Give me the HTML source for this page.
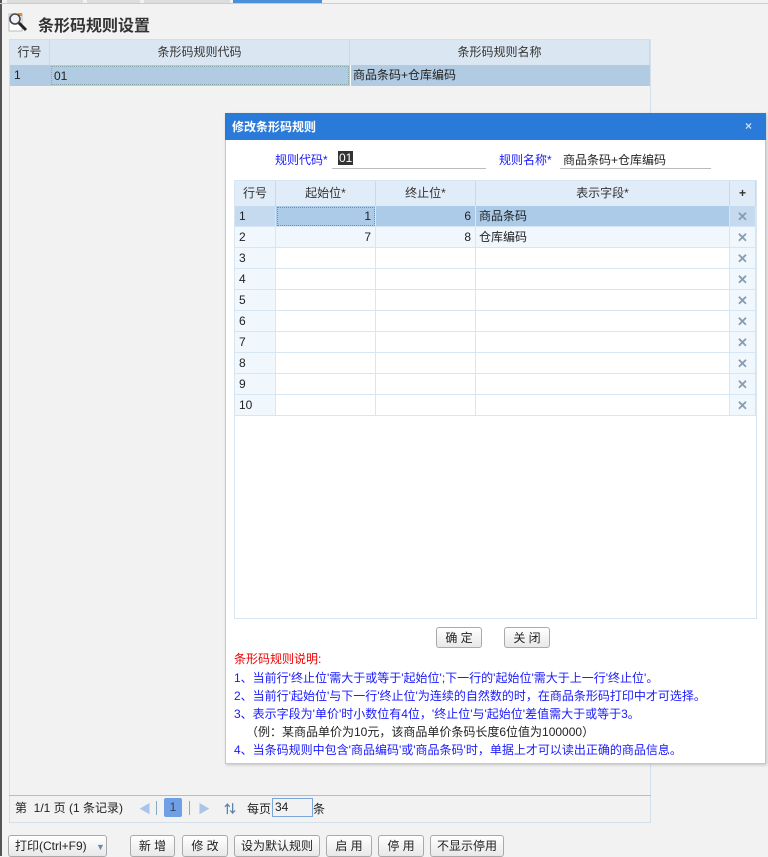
<!DOCTYPE html>
<html><head><meta charset="utf-8"><style>
*{margin:0;padding:0;box-sizing:border-box}
body{width:768px;height:856px;background:#f2f2f2;font-family:"Liberation Sans","Noto Sans CJK SC",sans-serif;font-size:12px;color:#222;position:relative;overflow:hidden}
.a{position:absolute}
.lb{left:0;top:0;width:2px;height:856px;background:#555}
.tab{top:0;height:3px;background:#ddd}
.hdr{background:#dae6f1;border-right:1px solid #c9d9e8;height:25px;line-height:25px;text-align:center;color:#333}
.cell{position:absolute;height:21px;line-height:21px;padding:0 4px;border-right:1px solid #d7e6f3;border-bottom:1px solid #d7e6f3}
.btn{position:absolute;top:835px;height:22px;border:1px solid #aaa;border-radius:3px;background:linear-gradient(#fff,#e8e8e8);text-align:center;line-height:20px;font-size:12px;color:#222}
.x{color:#8a9cb0;font-size:13px;text-align:center;font-weight:bold}
.blue{color:#1a1aff}
</style></head><body>
<div class="a lb"></div>
<div class="a tab" style="left:7px;width:76px"></div>
<div class="a tab" style="left:87px;width:53px"></div>
<div class="a tab" style="left:144px;width:86px"></div>
<div class="a tab" style="left:233px;width:89px;background:#4a8fd8"></div>
<div class="a" style="left:0;top:3px;width:768px;height:1px;background:#ccc"></div>
<svg class="a" style="left:7px;top:11px" width="24" height="22" viewBox="0 0 24 22"><rect x="2" y="3" width="13" height="17" fill="#fff" stroke="#bbb"/><rect x="11" y="2" width="4" height="3" fill="#e88a2a"/><circle cx="8" cy="8" r="5" fill="#eef3fa" stroke="#444" stroke-width="1.6"/><line x1="12" y1="12" x2="19" y2="19" stroke="#222" stroke-width="3"/></svg>
<div class="a" style="left:38px;top:12px;font-size:16px;font-weight:bold;color:#333">条形码规则设置</div>

<div class="a" style="left:9px;top:39px;width:642px;height:784px;border:1px solid #d3dfeb;background:#f2f2f2"></div>
<div class="a hdr" style="left:10px;top:40px;width:40px">行号</div>
<div class="a hdr" style="left:50px;top:40px;width:300px">条形码规则代码</div>
<div class="a hdr" style="left:350px;top:40px;width:300px">条形码规则名称</div>
<div class="a" style="left:10px;top:65px;width:640px;height:21px;background:#b1cbe3"></div>
<div class="a" style="left:14px;top:65px;line-height:21px">1</div>
<div class="a" style="left:51px;top:66px;width:298px;height:19px;border:1px dotted #8aa;line-height:19px;padding-left:2px">01</div>
<div class="a" style="left:350px;top:65px;width:1px;height:21px;background:#fff"></div>
<div class="a" style="left:353px;top:65px;line-height:21px">商品条码+仓库编码</div>
<div class="a" style="left:9px;top:795px;width:642px;height:1px;background:#bbb"></div>
<div class="a" style="left:15px;top:800px;line-height:16px">第&nbsp; 1/1 页 (1 条记录)</div>
<div class="a" style="left:139px;top:800px;color:#a8c4e8">◀</div>
<div class="a" style="left:156px;top:801px;width:1px;height:14px;background:#8ab"></div>
<div class="a" style="left:164px;top:798px;width:18px;height:19px;background:#6fa0e6;border-radius:2px;color:#345;text-align:center;line-height:19px">1</div>
<div class="a" style="left:189px;top:801px;width:1px;height:14px;background:#8ab"></div>
<div class="a" style="left:198px;top:800px;color:#a8c4e8">▶</div>
<div class="a" style="left:224px;top:800px;color:#5a7fa8;font-weight:bold">⇅</div>
<div class="a" style="left:247px;top:800px">每页</div>
<div class="a" style="left:272px;top:798px;width:41px;height:19px;border:1px solid #7aa6d8;background:#f2f2f2;padding-left:2px;line-height:17px">34</div>
<div class="a" style="left:313px;top:800px">条</div>

<div class="btn" style="left:8px;width:99px;text-align:left;padding-left:6px">打印(Ctrl+F9) <span style="color:#6a8ab8;font-size:9px;margin-left:6px">▼</span></div>
<div class="btn" style="left:130px;width:45px">新 增</div>
<div class="btn" style="left:182px;width:46px">修 改</div>
<div class="btn" style="left:234px;width:86px">设为默认规则</div>
<div class="btn" style="left:326px;width:46px">启 用</div>
<div class="btn" style="left:378px;width:46px">停 用</div>
<div class="btn" style="left:430px;width:74px">不显示停用</div>

<!-- dialog -->
<div class="a" style="left:225px;top:113px;width:541px;height:651px;background:#fff;border:1px solid #c8c8c8;box-shadow:1px 1px 3px rgba(0,0,0,.2)"></div>
<div class="a" style="left:225px;top:113px;width:541px;height:27px;background:#2a7ad9"></div>
<div class="a" style="left:232px;top:118px;color:#fff;font-weight:bold;font-size:12px">修改条形码规则</div>
<div class="a" style="left:745px;top:119px;color:#cde;font-weight:bold;font-size:12px">×</div>
<div class="a blue" style="left:275px;top:151px">规则代码*</div>
<div class="a" style="left:338px;top:151px;background:#333;color:#fff;line-height:14px;padding:0 1px">01</div>
<div class="a" style="left:332px;top:168px;width:154px;height:1px;background:#bbb"></div>
<div class="a blue" style="left:499px;top:151px">规则名称*</div>
<div class="a" style="left:563px;top:151px">商品条码+仓库编码</div>
<div class="a" style="left:560px;top:168px;width:151px;height:1px;background:#bbb"></div>

<div class="a" style="left:234px;top:180px;width:523px;height:439px;border:1px solid #d7e6f3"></div>
<div class="a hdr" style="left:235px;top:181px;width:41px;background:#e0ecf8">行号</div>
<div class="a hdr" style="left:276px;top:181px;width:100px;background:#e0ecf8">起始位*</div>
<div class="a hdr" style="left:376px;top:181px;width:100px;background:#e0ecf8">终止位*</div>
<div class="a hdr" style="left:476px;top:181px;width:254px;background:#e0ecf8">表示字段*</div>
<div class="a hdr" style="left:730px;top:181px;width:26px;background:#e0ecf8;font-weight:bold">+</div>
<div id="rows"></div>

<div class="btn" style="left:436px;top:627px;width:46px;height:21px">确 定</div>
<div class="btn" style="left:504px;top:627px;width:46px;height:21px">关 闭</div>
<div class="a" style="left:234px;top:650px;color:#e00">条形码规则说明:</div>
<div class="a blue" style="left:234px;top:669px">1、当前行'终止位'需大于或等于'起始位';下一行的'起始位'需大于上一行'终止位'。</div>
<div class="a blue" style="left:234px;top:687px">2、当前行'起始位'与下一行'终止位'为连续的自然数的时，在商品条形码打印中才可选择。</div>
<div class="a blue" style="left:234px;top:705px">3、表示字段为'单价'时小数位有4位，'终止位'与'起始位'差值需大于或等于3。</div>
<div class="a" style="left:246px;top:723px">（例：某商品单价为10元，该商品单价条码长度6位值为100000）</div>
<div class="a blue" style="left:234px;top:741px">4、当条码规则中包含'商品编码'或'商品条码'时，单据上才可以读出正确的商品信息。</div>
<script>
var d=[["1","1","6","商品条码"],["2","7","8","仓库编码"]],h="";
for(var i=0;i<10;i++){var t=206+i*21,r=d[i]||[(i+1)+"","","",""],sel=i==0;
var bg=sel?"#abcbe8":(i==1?"#f0f7fd":"#fff"),b0=sel?"#c5daee":"#f0f7fd";
h+='<div class="cell" style="left:235px;top:'+t+'px;width:41px;background:'+b0+'">'+r[0]+'</div>';
h+='<div class="cell" style="left:276px;top:'+t+'px;width:100px;text-align:right;background:'+bg+(sel?';outline:1px dotted #889;outline-offset:-2px':'')+'">'+r[1]+'</div>';
h+='<div class="cell" style="left:376px;top:'+t+'px;width:100px;text-align:right;background:'+bg+'">'+r[2]+'</div>';
h+='<div class="cell" style="left:476px;top:'+t+'px;width:254px;padding-left:3px;background:'+bg+'">'+r[3]+'</div>';
h+='<div class="cell x" style="left:730px;top:'+t+'px;width:26px;background:'+(sel?"#c5daee":"#f0f7fd")+'">✕</div>';}
document.getElementById("rows").innerHTML=h;
</script>
</body></html>
